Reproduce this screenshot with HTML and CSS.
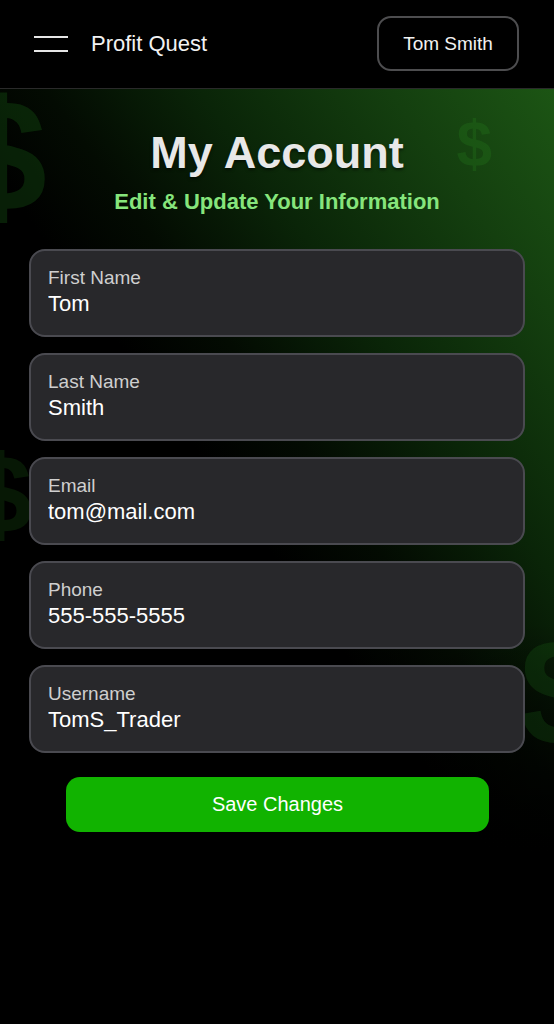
FILE: index.html
```html
<!DOCTYPE html>
<html lang="en">
  <head>
    <meta charset="UTF-8" />
    <meta name="viewport" content="width=device-width, initial-scale=1.0" />
    <title>Profit Quest - My Account</title>
    <link rel="stylesheet" href="styles.css">
  </head>
  <body>
    <header class="topbar">
      <div class="brand">
        <button class="menu-btn" aria-label="Menu">
          <span></span>
          <span></span>
        </button>
        <span class="brand-name">Profit Quest</span>
      </div>
      <button class="user-btn">Tom Smith</button>
    </header>

    <main class="account">
      <!-- decorative dollar signs -->
      <span class="dollar dollar-1" aria-hidden="true">$</span>
      <span class="dollar dollar-2" aria-hidden="true">$</span>
      <span class="dollar dollar-3" aria-hidden="true">$</span>
      <span class="dollar dollar-4" aria-hidden="true">$</span>

      <h1 class="title">My Account</h1>
      <p class="subtitle">Edit &amp; Update Your Information</p>

      <form class="account-form" onsubmit="return false;">
        <label class="field">
          <span class="field-label">First Name</span>
          <input class="field-input" type="text" value="Tom" />
        </label>
        <label class="field">
          <span class="field-label">Last Name</span>
          <input class="field-input" type="text" value="Smith" />
        </label>
        <label class="field">
          <span class="field-label">Email</span>
          <input class="field-input" type="email" value="tom@mail.com" />
        </label>
        <label class="field">
          <span class="field-label">Phone</span>
          <input class="field-input" type="tel" value="555-555-5555" />
        </label>
        <label class="field">
          <span class="field-label">Username</span>
          <input class="field-input" type="text" value="TomS_Trader" />
        </label>

        <button class="save-btn" type="submit">Save Changes</button>
      </form>
    </main>
  </body>
</html>
```

FILE: styles.css
```css
* {
  box-sizing: border-box;
}
body {
  margin: 0;
  min-height: 1024px;
  background-color: #000;
  font-family: "Liberation Sans", Arial, sans-serif;
  color: #fff;
}
.topbar {
  height: 89px;
  display: flex;
  align-items: center;
  justify-content: space-between;
  padding: 0 35px 0 34px;
  background-color: #000;
  border-bottom: 1px solid #2a2a2a;
}
.brand {
  display: flex;
  align-items: center;
  gap: 23px;
}
.menu-btn {
  width: 34px;
  height: 16px;
  padding: 0;
  background: none;
  border: none;
  display: flex;
  flex-direction: column;
  justify-content: space-between;
  cursor: pointer;
}
.menu-btn span {
  display: block;
  width: 34px;
  height: 2px;
  background-color: #e6e6e6;
}
.brand-name {
  font-size: 22px;
  color: #f2f2f2;
}
.user-btn {
  width: 142px;
  height: 55px;
  margin-top: -1px;
  background-color: #000;
  border: 2px solid #4d4d4f;
  border-radius: 14px;
  color: #f2f2f2;
  font-family: inherit;
  font-size: 19px;
  cursor: pointer;
}
.account {
  position: relative;
  overflow: hidden;
  padding: 36px 29px 20px;
  background:
    linear-gradient(to bottom, rgba(0, 0, 0, 0) 70%, #000 100%),
    linear-gradient(
      to bottom left,
      #1c5514 0%,
      #143f0f 15%,
      #0a2508 32%,
      #030b02 46%,
      #000 56%
    );
}
.dollar {
  position: absolute;
  font-weight: bold;
  line-height: 1;
  color: rgba(40, 130, 30, 0.26);
  pointer-events: none;
}
.dollar-1 {
  top: -13px;
  left: -42px;
  font-size: 160px;
  color: rgba(30, 110, 25, 0.28);
}
.dollar-2 {
  top: 23px;
  right: 62px;
  font-size: 64px;
}
.dollar-3 {
  top: 350px;
  left: -30px;
  font-size: 112px;
  color: rgba(30, 110, 25, 0.22);
}
.dollar-4 {
  top: 527px;
  right: -50px;
  font-size: 152px;
  color: rgba(30, 110, 25, 0.24);
}
.title {
  position: relative;
  margin: 0;
  text-align: center;
  font-size: 45px;
  line-height: 55px;
  font-weight: bold;
  color: #e8e8e8;
  text-shadow: 0 2px 3px rgba(0, 0, 0, 0.5);
}
.subtitle {
  position: relative;
  margin: 10px 0 35px;
  text-align: center;
  font-size: 22px;
  line-height: 24px;
  font-weight: bold;
  color: #86e57c;
}
.account-form {
  position: relative;
  display: flex;
  flex-direction: column;
  gap: 16px;
}
.field {
  display: flex;
  flex-direction: column;
  gap: 2px;
  height: 88px;
  padding: 16px 17px 18px;
  background-color: #28282b;
  border: 2px solid #4a4a50;
  border-radius: 16px;
}
.field-label {
  font-size: 19px;
  line-height: 22px;
  color: #cfcfcf;
}
.field-input {
  width: 100%;
  height: 26px;
  padding: 0;
  background: none;
  border: none;
  outline: none;
  font-family: inherit;
  font-size: 22px;
  line-height: 26px;
  color: #fff;
}
.save-btn {
  height: 55px;
  margin: 8px 36px 0 37px;
  background-color: #11b300;
  border: none;
  border-radius: 14px;
  color: #fff;
  font-family: inherit;
  font-size: 20px;
  cursor: pointer;
}
.save-btn:hover {
  background-color: #0e9a00;
}
```
